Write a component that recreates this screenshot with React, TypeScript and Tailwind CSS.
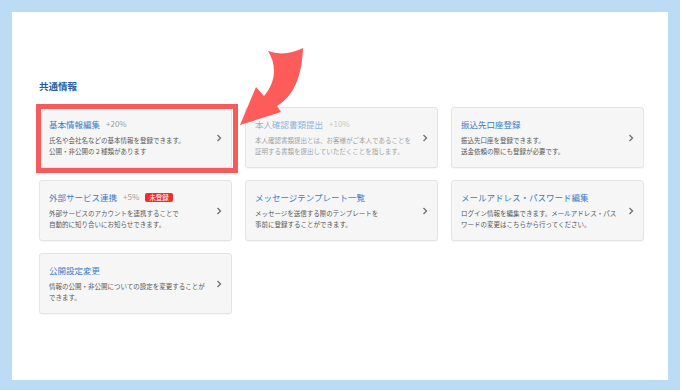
import React from "react";

type Item = {
  id: number;
  title: string;
  rate?: string;
  badge?: string;
  lines: string[];
  faded?: boolean;
  highlight?: boolean;
};

const items: Item[] = [
  {
    id: 1,
    title: "基本情報編集",
    rate: "+20%",
    lines: ["氏名や会社名などの基本情報を登録できます。", "公開・非公開の２種類があります"],
    highlight: true,
  },
  {
    id: 2,
    title: "本人確認書類提出",
    rate: "+10%",
    lines: ["本人確認書類提出とは、お客様がご本人であることを", "証明する書類を提出していただくことを指します。"],
    faded: true,
  },
  {
    id: 3,
    title: "振込先口座登録",
    lines: ["振込先口座を登録できます。", "送金依頼の際にも登録が必要です。"],
  },
  {
    id: 4,
    title: "外部サービス連携",
    rate: "+5%",
    badge: "未登録",
    lines: ["外部サービスのアカウントを連携することで", "自動的に知り合いにお知らせできます。"],
  },
  {
    id: 5,
    title: "メッセージテンプレート一覧",
    lines: ["メッセージを送信する際のテンプレートを", "事前に登録することができます。"],
  },
  {
    id: 6,
    title: "メールアドレス・パスワード編集",
    lines: ["ログイン情報を編集できます。メールアドレス・パス", "ワードの変更はこちらから行ってください。"],
  },
  {
    id: 7,
    title: "公開設定変更",
    lines: ["情報の公開・非公開についての設定を変更することが", "できます。"],
  },
];

function Chevron() {
  return (
    <svg width="6" height="8" viewBox="0 0 6 8" className="shrink-0">
      <polyline points="1.5,1 4.5,4 1.5,7" fill="none" stroke="#707070" strokeWidth="1.3" />
    </svg>
  );
}

function Card({ item }: { item: Item }) {
  return (
    <div className="relative h-[61px]">
      <div className="flex h-full items-center rounded-[3px] border border-[#e4e4e4] bg-[#f6f6f6] pl-[9px] pr-[9px] shadow-[0_1px_1px_rgba(0,0,0,0.04)]">
        <div className={item.faded ? "flex-1 opacity-55" : "flex-1"}>
          <div className="flex items-center leading-[12px]">
            <span className="text-[8.5px] text-[#3a7cc6]">{item.title}</span>
            {item.rate && (
              <span className="ml-[6px] text-[8px] text-[#a0a0a0]">{item.rate}</span>
            )}
            {item.badge && (
              <span className="ml-[6px] rounded-[2px] bg-[#ee2e2e] px-[4px] text-[6.5px] leading-[9px] text-white">
                {item.badge}
              </span>
            )}
          </div>
          <div className="mt-[5px] text-[6.5px] leading-[11px] whitespace-nowrap text-[#595959]">
            {item.lines.map((l) => (
              <div key={l}>{l}</div>
            ))}
          </div>
        </div>
        <Chevron />
      </div>
      {item.highlight && (
        <div className="pointer-events-none absolute -top-[3px] -left-[3px] -right-[6px] -bottom-[5px] border-[5px] border-[#f65a5a]" />
      )}
    </div>
  );
}

export default function App() {
  return (
    <div
      className="relative h-[390px] w-[680px] bg-[#bcdcf5] pt-[12px] pl-[12px] pr-[12px] pb-[10px]"
      style={{ fontFamily: '"Noto Sans CJK JP", "Noto Sans", sans-serif' }}
    >
      <div className="h-full bg-white pl-[27px] pt-[67px]">
        <h2 className="text-[9.5px] leading-[14px] font-bold text-[#1e5ea8]">共通情報</h2>
        <div className="mt-[14px] grid w-[605px] grid-cols-3 gap-x-[13px] gap-y-[12px]">
          {items.map((it) => (
            <Card key={it.id} item={it} />
          ))}
        </div>
      </div>
      <svg
        className="pointer-events-none absolute inset-0"
        width="680"
        height="390"
        viewBox="0 0 680 390"
      >
        <path
          d="M268,51 Q285,57 303,48 C302,76 294,96 277,106 L281,112 L240,125 L256,87 L264,96 C276,82 277,65 268,51 Z"
          fill="#fe5b5b"
        />
      </svg>
    </div>
  );
}
